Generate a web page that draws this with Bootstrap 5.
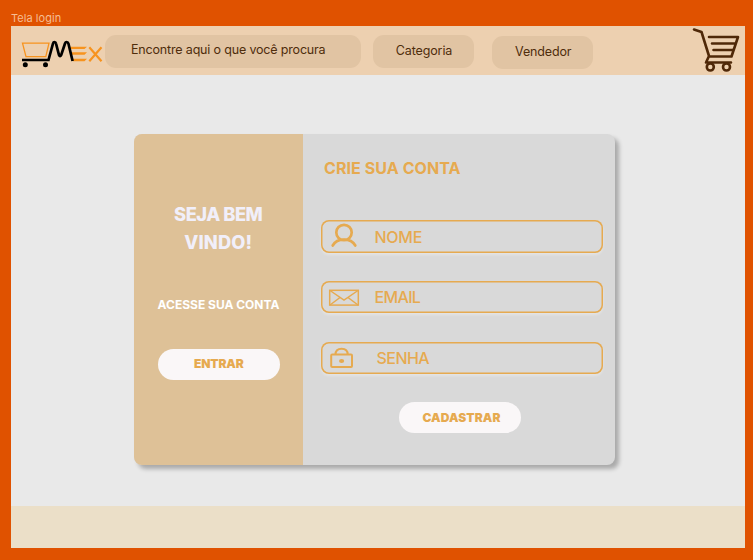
<!DOCTYPE html>
<html lang="pt-BR">
<head>
<meta charset="utf-8">
<meta name="viewport" content="width=device-width, initial-scale=1">
<title>Tela login</title>
<link href="https://cdn.jsdelivr.net/npm/bootstrap@5.3.0/dist/css/bootstrap.min.css" rel="stylesheet">
<style>
body{background:#e05200;font-family:Inter,sans-serif;width:753px;height:560px;overflow:hidden;padding:0 8px 12px 11px}
.frame-name{height:26px;padding-top:11px;font-size:11px;line-height:15px;color:#f6bd93;letter-spacing:.05px}
.screen{height:522px;background:#e9e9e9;width:734px}
.topbar{height:49px;background:#edd0b0;padding:0}
.logo{width:83px;height:30px;margin:13px 0 0 10px}
.pill{background:#e1c4a3;border-radius:11px;color:#4f2d0c;font-size:12.5px;line-height:16px;height:33px;white-space:nowrap;border:0;padding:0}
.pill-search{width:256.5px;margin:9px 0 0 .5px;padding:7px 0 0 26.5px;letter-spacing:-.17px}
.pill-cat{width:101px;margin:9.4px 0 0 12px;padding:0 0 2px 1px;letter-spacing:-.13px}
.pill-sell{width:101.5px;margin:10px 0 0 17.5px;padding:0 0 2px 2px;letter-spacing:-.15px}
.cart{width:48px;height:46px;margin:1px 5px 0 auto}
.stage{height:431px;padding:59px 0 0 122.5px}
.login-card{width:481.5px;height:330.5px;border-radius:8px;box-shadow:4px 4px 4px rgba(0,0,0,.27);background:#d9d9d9;overflow:hidden}
.welcome{width:169.5px;background:#dec197;padding-top:67px}
.hello{font-size:18.3px;line-height:27.5px;font-weight:800;color:#f1effa;margin:0;white-space:nowrap}
.hello .first-line{letter-spacing:-.5px}
.hello .second-line{letter-spacing:.15px}
.access{font-size:12px;line-height:16px;font-weight:700;color:#fff;margin:41px 0 0 .5px;white-space:nowrap}
.action{width:122px;height:30.5px;border-radius:16px;background:#faf7f8;color:#e6aa50;border:0;font-size:12px;line-height:30px;font-weight:900;padding:0;white-space:nowrap}
.enter{margin:36px 0 0 1px;letter-spacing:-.15px}
.register{margin-left:78px;padding:0 0 0 4px;letter-spacing:.1px}
.signup{width:312px;padding:24px 0 0 17.5px}
.signup h2{font-size:16px;line-height:20px;font-weight:700;color:#e6aa50;margin:0 0 42px 3.5px;white-space:nowrap;letter-spacing:.08px}
.field{width:282.5px;height:32.5px;border-radius:8px;margin-bottom:28.3px;color:#e6aa50;font-size:16px;font-weight:500;box-shadow:inset 0 0 0 1.5px #e6aa50,0 2px 3px rgba(255,255,255,.3)}
.field svg{width:34px;height:30px;margin-left:7.5px;flex:none}
.field span{line-height:20px;white-space:nowrap;margin-left:12.5px;padding-top:2px;letter-spacing:-.25px}
.field .label-email{letter-spacing:-.65px;padding-top:0}
.field .label-senha{margin-left:14.5px;letter-spacing:-.55px;padding-top:0}
.bottombar{height:42px;background:#ebdfc8}
</style>
</head>
<body>
<div class="frame-name">Tela login</div>
<div class="screen d-flex flex-column">
  <header class="topbar d-flex align-items-start">
    <svg class="logo" viewBox="21 39 83 30" fill="none">
      <path d="M22.500 43.200H49L45.800 56.600H26Z" stroke="#f7931e" stroke-width="1.300"/>
      <path d="M70 46.700H87L84.500 49H71ZM71 52.300H87L84.500 54.700H72ZM72 58.800H87L84.500 61.200H73Z" fill="#f7931e"/>
      <path d="M22 60H48.500L53 43.500Q53.400 42 54.500 42Q55.700 42 56 43.500L59 55Q60 57.500 61.200 55L65 43.500Q65.500 42 66.700 42Q68 42 68.400 43.500L72.600 61" stroke="#000" stroke-width="2.700"/>
      <circle cx="25.300" cy="64.700" r="2.500" fill="#000"/><circle cx="45.500" cy="64.700" r="2.500" fill="#000"/>
      <path d="M89.300 47.300L101.500 61.200M101.500 47.300L89.300 61.200" stroke="#f7931e" stroke-width="2.200"/>
    </svg>
    <div class="pill pill-search"><span>Encontre aqui o que você procura</span></div>
    <button class="pill pill-cat" type="button">Categoria</button>
    <button class="pill pill-sell" type="button">Vendedor</button>
    <svg class="cart" viewBox="692 27 48 46" fill="none" stroke="#4f2808" stroke-width="2.600" stroke-linecap="round" stroke-linejoin="round">
      <path d="M694 29.500L701.500 32L709 56L706 62.500H731M709 37H738L731.500 56.500H709M712 43.500H735M713.500 50H732.500"/>
      <circle cx="710.300" cy="67" r="3.500"/><circle cx="726.500" cy="67" r="3.500"/>
    </svg>
  </header>
  <main class="stage">
    <section class="login-card d-flex">
      <div class="welcome text-center">
        <h1 class="hello"><span class="first-line">SEJA BEM</span><br><span class="second-line">VINDO!</span></h1>
        <p class="access">ACESSE SUA CONTA</p>
        <button class="action enter" type="button">ENTRAR</button>
      </div>
      <form class="signup">
        <h2>CRIE SUA CONTA</h2>
        <div class="field d-flex align-items-center">
          <svg viewBox="328 222 34 30" fill="none" stroke="#e6aa50" stroke-width="2.700" stroke-linecap="round"><circle cx="344" cy="233.500" r="7.700"/><path d="M332.700 246.500C335 242.500 339 240.700 344 240.700S353 242.500 355.300 246.500"/></svg>
          <span>NOME</span>
        </div>
        <div class="field d-flex align-items-center">
          <svg viewBox="328 282 34 30" fill="none" stroke="#e6aa50" stroke-width="1.500"><rect x="329.700" y="290.300" width="28.600" height="14.800"/><path d="M330 290.500L344 300L358 290.500M330 305L340 297.500M358 305L348 297.500"/></svg>
          <span class="label-email">EMAIL</span>
        </div>
        <div class="field d-flex align-items-center">
          <svg viewBox="328 343 34 30" fill="none" stroke="#e6aa50"><rect x="331.200" y="354.500" width="20.800" height="12.400" rx="1" stroke-width="2"/><path d="M335.500 354.500C335.500 350.500 338 348.700 341.600 348.700S347.700 350.500 347.700 354.500" stroke-width="2"/><ellipse cx="341.600" cy="361" rx="2.600" ry="1.900" fill="#e6aa50" stroke="none"/></svg>
          <span class="label-senha">SENHA</span>
        </div>
        <button class="action register" type="button">CADASTRAR</button>
      </form>
    </section>
  </main>
  <footer class="bottombar"></footer>
</div>
<script src="https://cdn.jsdelivr.net/npm/bootstrap@5.3.0/dist/js/bootstrap.bundle.min.js"></script>
</body>
</html>
